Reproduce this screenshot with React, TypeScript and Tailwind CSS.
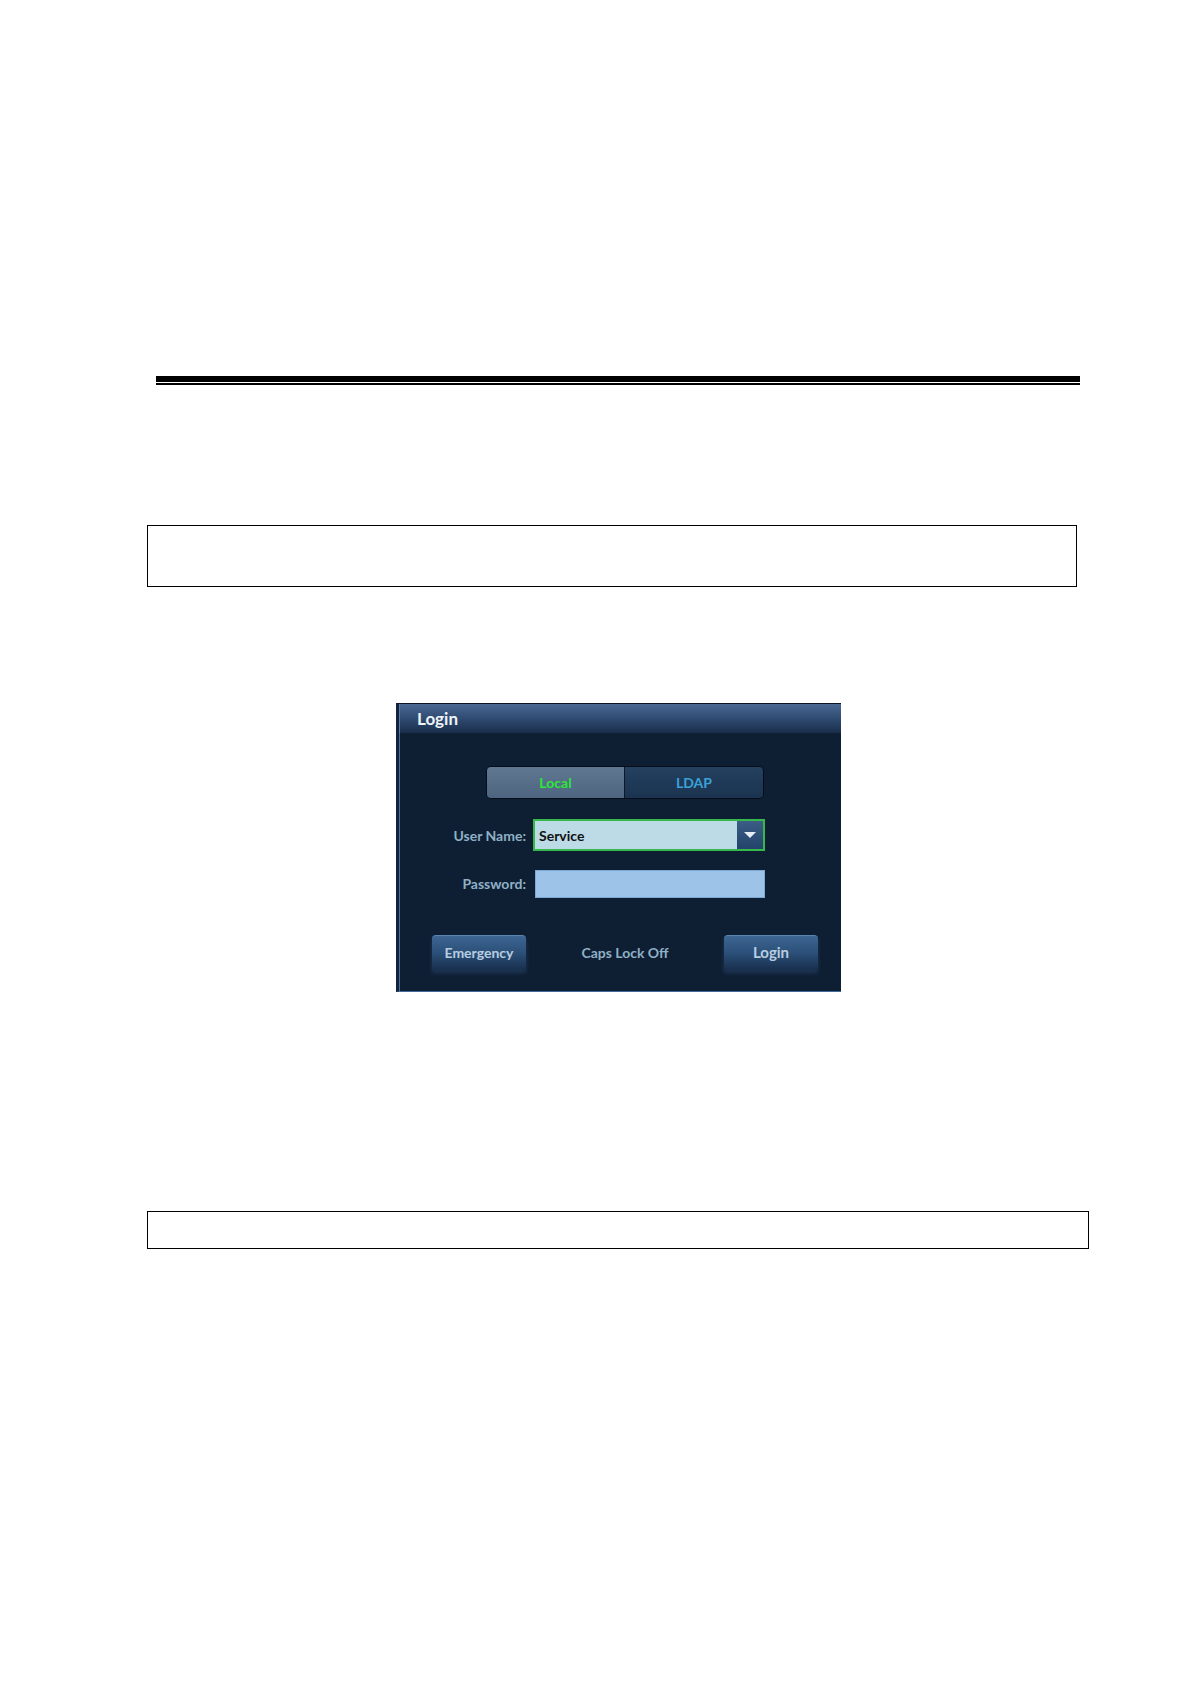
import React from "react";

export default function App() {
  const font = { fontFamily: "Lato, 'Open Sans', 'Noto Sans', sans-serif" };
  return (
    <div className="w-[1191px] h-[1684px] bg-white relative overflow-hidden" style={font}>
      {/* header rule */}
      <div className="pt-[376px] pl-[156px]">
        <div className="w-[924px] h-[6px] bg-black" />
        <div className="w-[924px] h-[1px] bg-white" />
        <div className="w-[924px] h-[2px] bg-black" />
      </div>

      {/* first empty box */}
      <div className="mt-[140px] ml-[147px] w-[930px] h-[62px] border border-black" />

      {/* login dialog */}
      <div className="mt-[116px] ml-[396px] w-[445px] h-[289px] flex flex-col bg-[#0e1f33] border-t border-t-[#0a1525] border-l-[3px] border-l-[#13233a] border-b border-b-[#3f6a9c] shadow-[inset_1px_0_0_#4b6f9c]">
        <div className="h-[29px] flex items-center pl-[18px] bg-gradient-to-b from-[#4a6892] via-[#2f4b72] to-[#1a2e4b] shadow-[inset_1px_0_0_#5a7eab]">
          <span className="text-[17px] font-bold text-[#eef3f8] leading-none">Login</span>
        </div>
        <div className="flex-1 flex flex-col">
          {/* tabs */}
          <div className="mt-[33px] ml-[87px] w-[278px] h-[33px] flex rounded-[5px] border border-[#060d18] overflow-hidden">
            <div className="w-[138px] h-full flex items-center justify-center bg-gradient-to-b from-[#5f7790] to-[#4d6580] border-r border-r-[#0d1828]">
              <span className="text-[14px] font-bold text-[#2ee63a]">Local</span>
            </div>
            <div className="flex-1 h-full flex items-center justify-center bg-gradient-to-b from-[#24415f] to-[#1a3350]">
              <span className="text-[14px] font-bold text-[#3aa2d6]">LDAP</span>
            </div>
          </div>

          {/* user name */}
          <div className="mt-[20px] flex items-center h-[32px]">
            <div className="w-[127px] text-right text-[14px] font-bold text-[#8fb0c6]">User Name:</div>
            <div className="ml-[7px] w-[232px] h-[32px] border-2 border-[#36b84a] bg-[#bcdbe6] flex items-center">
              <span className="pl-[4px] flex-1 text-[14px] font-bold text-[#111]">Service</span>
              <div className="w-[26px] h-full bg-gradient-to-b from-[#3b5e86] to-[#23436a] flex items-center justify-center">
                <svg width="12" height="7" viewBox="0 0 12 7">
                  <path d="M0 0 L12 0 L6 6 Z" fill="#e6eef6" />
                </svg>
              </div>
            </div>
          </div>

          {/* password */}
          <div className="mt-[18px] flex items-center h-[29px]">
            <div className="w-[127px] text-right text-[14px] font-bold text-[#8fb0c6]">Password:</div>
            <div className="ml-[9px] w-[230px] h-[28px] bg-[#9dc4e8] border border-[#7fa8cf]" />
          </div>

          {/* buttons */}
          <div className="mt-[36px] flex items-center h-[36px]">
            <div className="ml-[33px] w-[94px] h-[35px] rounded-t-[4px] bg-gradient-to-b from-[#3d6692] via-[#2b5079] to-[#182f4e] border-t border-t-[#5c84b0] shadow-[0_3px_4px_rgba(60,100,150,0.35)] flex items-center justify-center">
              <span className="text-[14px] font-bold text-[#b9cde0]">Emergency</span>
            </div>
            <div className="flex-1 text-center text-[14px] font-bold text-[#8fb0c6]">Caps Lock Off</div>
            <div className="mr-[23px] w-[94px] h-[35px] rounded-t-[4px] bg-gradient-to-b from-[#3d6692] via-[#2b5079] to-[#182f4e] border-t border-t-[#5c84b0] shadow-[0_3px_4px_rgba(60,100,150,0.35)] flex items-center justify-center">
              <span className="text-[15px] font-bold text-[#b9cde0]">Login</span>
            </div>
          </div>
        </div>
      </div>

      {/* second empty box */}
      <div className="mt-[219px] ml-[147px] w-[942px] h-[38px] border border-black" />
    </div>
  );
}
